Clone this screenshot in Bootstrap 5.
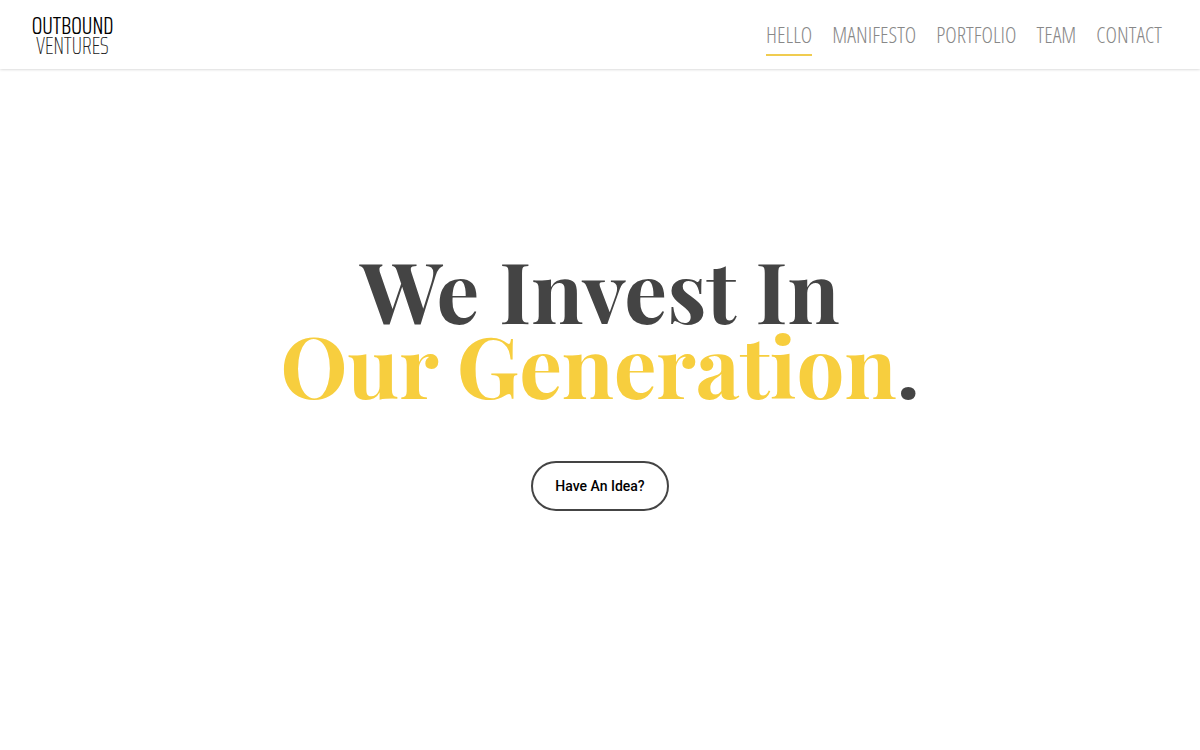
<!DOCTYPE html>
<html lang="en">
<head>
<meta charset="utf-8">
<meta name="viewport" content="width=device-width, initial-scale=1">
<title>Outbound Ventures</title>
<link href="https://cdn.jsdelivr.net/npm/bootstrap@5.3.0/dist/css/bootstrap.min.css" rel="stylesheet">
<style>
  .site-header { height: 69px; padding: 0 38px 0 32px; box-shadow: 0 0 3px rgba(0, 0, 0, .25); }
  .brand-logo { width: 81px; padding-top: 2px; font-family: "Saira ExtraCondensed", "Open Sans Condensed Light", sans-serif; line-height: 21px; color: #000; }
  .brand-top { font-size: 25px; font-weight: 300; }
  .brand-bottom { font-size: 24px; font-weight: 100; color: #222; }
  .main-menu { gap: 20px; }
  .main-menu .nav-link { padding: 2px 0; font: 300 22px/36px "Open Sans Condensed Light", "Open Sans Condensed", sans-serif; font-kerning: none; color: #888; border-bottom: 2px solid transparent; }
  .main-menu .nav-link.active { border-color: #f0cc50; }
  .hero { padding-bottom: 58px; }
  .hero-title { font: 700 85px/75px "Playfair Display", "Liberation Serif", serif; color: #444; margin-bottom: 60px; }
  .hero-accent { color: #f7ce3e; }
  .btn-idea { padding: 12px 22px; font: 500 14px/22px Roboto, sans-serif; color: #000; border: 2px solid #444; border-radius: 25px; }
</style>
</head>
<body class="bg-white min-vh-100 d-flex flex-column">
<header class="site-header d-flex align-items-center justify-content-between">
  <a href="#" class="brand-logo d-flex flex-column align-items-center text-decoration-none">
    <span class="brand-top">OUTBOUND</span>
    <span class="brand-bottom">VENTURES</span>
  </a>
  <nav aria-label="Main">
    <ul class="nav main-menu">
      <li class="nav-item"><a class="nav-link active" aria-current="page" href="#">HELLO</a></li>
      <li class="nav-item"><a class="nav-link" href="#">MANIFESTO</a></li>
      <li class="nav-item"><a class="nav-link" href="#">PORTFOLIO</a></li>
      <li class="nav-item"><a class="nav-link" href="#">TEAM</a></li>
      <li class="nav-item"><a class="nav-link" href="#">CONTACT</a></li>
    </ul>
  </nav>
</header>
<main class="hero flex-grow-1 d-flex flex-column align-items-center justify-content-center text-center">
  <h1 class="hero-title">We Invest In<br><span class="hero-accent">Our Generation</span>.</h1>
  <button type="button" class="btn btn-idea">Have An Idea?</button>
</main>
<script src="https://cdn.jsdelivr.net/npm/bootstrap@5.3.0/dist/js/bootstrap.bundle.min.js"></script>
</body>
</html>
